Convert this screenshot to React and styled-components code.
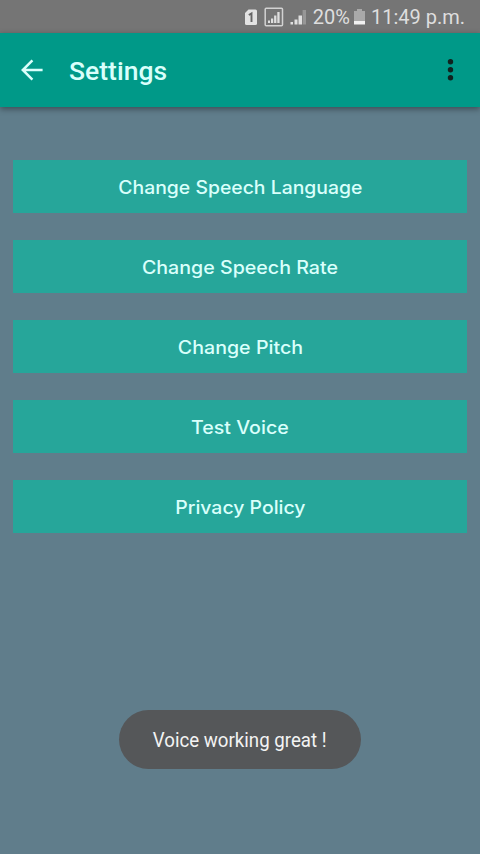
import React, { Fragment } from "react";
import styled, { createGlobalStyle } from "styled-components";

const teal = "#009988";
const button = "#26a69a";
const background = "#607d8b";
const text = "#d9fffb";

const items = [
  { label: "Change Speech Language", stretch: 1.077 },
  { label: "Change Speech Rate", stretch: 1.09 },
  { label: "Change Pitch", stretch: 1.09 },
  { label: "Test Voice", stretch: 1.09 },
  { label: "Privacy Policy", stretch: 1.08 },
];

const SimIcon = () => (
  <svg width="14" height="17" viewBox="0 0 14 17">
    <path
      d="M4.5 0.5h7A1.5 1.5 0 0 1 13 2v12.5a1.5 1.5 0 0 1-1.5 1.5h-9A1.5 1.5 0 0 1 1 14.5V4z"
      fill="#e2e2e2"
    />
    <path d="M4.8 6l2.7-1.6V13" fill="none" stroke="#666" strokeWidth="1.9" />
  </svg>
);

const BoxedSignalIcon = () => (
  <svg width="20" height="20" viewBox="0 0 20 20">
    <rect x="1.2" y="1.2" width="17.3" height="17.6" rx="1" fill="none" stroke="#d2d2d2" strokeWidth="1.5" />
    <path d="M4 13.5h2V16H4zM7 11.5h2.2V16H7zM10.1 8.5h2.3V16h-2.3zM13.3 5h2.3v11h-2.3z" fill="#dedede" />
  </svg>
);

const SignalIcon = () => (
  <svg width="17" height="16" viewBox="0 0 17 16">
    <path d="M0.5 13H3v2.5H0.5zM4.5 10.5h3v5h-3zM8.5 6.5H12v9H8.5z" fill="#e0e0e0" />
    <path d="M12.6 1H16v14.5h-3.4z" fill="#979797" />
  </svg>
);

const BatteryIcon = () => (
  <svg width="11" height="16" viewBox="0 0 11 16">
    <path d="M3 0h5v2h3v10.5H0V2h3z" fill="#a9a9a9" />
    <path d="M0 12h11v3.5H0z" fill="#f1f1f1" />
  </svg>
);

const BackIcon = () => (
  <svg width="24" height="24" viewBox="0 0 24 24">
    <path d="M22.6 12H3M12.4 2.4L2.8 12l9.6 9.6" fill="none" stroke={text} strokeWidth="2.5" />
  </svg>
);

const MenuIcon = () => (
  <svg width="8" height="24" viewBox="0 0 8 24">
    <g fill="#10231f">
      <circle cx="4.5" cy="3.8" r="2.7" />
      <circle cx="4.5" cy="11.8" r="2.7" />
      <circle cx="4.5" cy="19.8" r="2.7" />
    </g>
  </svg>
);

const App = () => (
  <Fragment>
    <GlobalStyle />
    <Screen>
      <StatusBar>
        <SimIcon />
        <BoxedSignalIcon />
        <SignalIcon />
        <Percent>20%</Percent>
        <BatteryIcon />
        <Clock>11:49 p.m.</Clock>
      </StatusBar>

      <Toolbar>
        <IconButton aria-label="Back">
          <BackIcon />
        </IconButton>
        <Title>Settings</Title>
        <IconButton aria-label="More options">
          <MenuIcon />
        </IconButton>
      </Toolbar>

      <List>
        {items.map(({ label, stretch }) => (
          <SettingButton key={label}>
            <Label $stretch={stretch}>{label}</Label>
          </SettingButton>
        ))}
      </List>

      <Toast>
        <ToastText>Voice working great !</ToastText>
      </Toast>
    </Screen>
  </Fragment>
);

const GlobalStyle = createGlobalStyle`
  * {
    box-sizing: border-box;
  }

  body {
    margin: 0;
    background: ${background};
    font-family: Roboto, sans-serif;
  }

  svg {
    display: block;
    flex: none;
  }
`;

const Screen = styled.div`
  display: flex;
  flex-direction: column;
  width: 480px;
  height: 854px;
  overflow: hidden;
  background: ${background};
`;

const StatusBar = styled.header`
  display: flex;
  flex: none;
  justify-content: flex-end;
  align-items: center;
  height: 33px;
  padding: 1px 15px 0 0;
  background: #757575;
  color: #dedede;
  font-size: 20px;
  line-height: 24px;

  svg + svg {
    margin-left: 6px;
  }
`;

const Percent = styled.span`
  margin: 0 4px 0 6px;
`;

const Clock = styled.span`
  margin-left: 6px;
`;

const Toolbar = styled.div`
  display: flex;
  flex: none;
  align-items: center;
  height: 74px;
  padding: 0 26px 0 20px;
  background: ${teal};
  box-shadow: 0 2px 6px rgba(0, 0, 0, 0.4);
`;

const IconButton = styled.button`
  padding: 0;
  border: 0;
  background: none;
`;

const Title = styled.h1`
  flex: 1;
  margin: 2px 0 0 25px;
  color: ${text};
  font-size: 26.5px;
  font-weight: 500;
  line-height: 32px;
`;

const List = styled.main`
  display: flex;
  flex-direction: column;
  gap: 27px;
  padding: 53px 13px 0;
`;

const SettingButton = styled.button`
  display: flex;
  justify-content: center;
  align-items: center;
  height: 53px;
  padding: 2px 0 0;
  border: 0;
  background: ${button};
  color: ${text};
`;

const Label = styled.span`
  font-family: Inter, sans-serif;
  font-size: 18px;
  font-weight: 500;
  white-space: nowrap;
  transform: scaleX(${({ $stretch }) => $stretch});
`;

const Toast = styled.div`
  display: flex;
  justify-content: center;
  align-items: center;
  align-self: center;
  width: 242px;
  height: 59px;
  margin: auto 0 85px;
  border-radius: 30px;
  background: #555759;
`;

const ToastText = styled.span`
  color: #f3f3f3;
  font-size: 21px;
  white-space: nowrap;
  transform: scaleX(0.89);
`;

export default App;
